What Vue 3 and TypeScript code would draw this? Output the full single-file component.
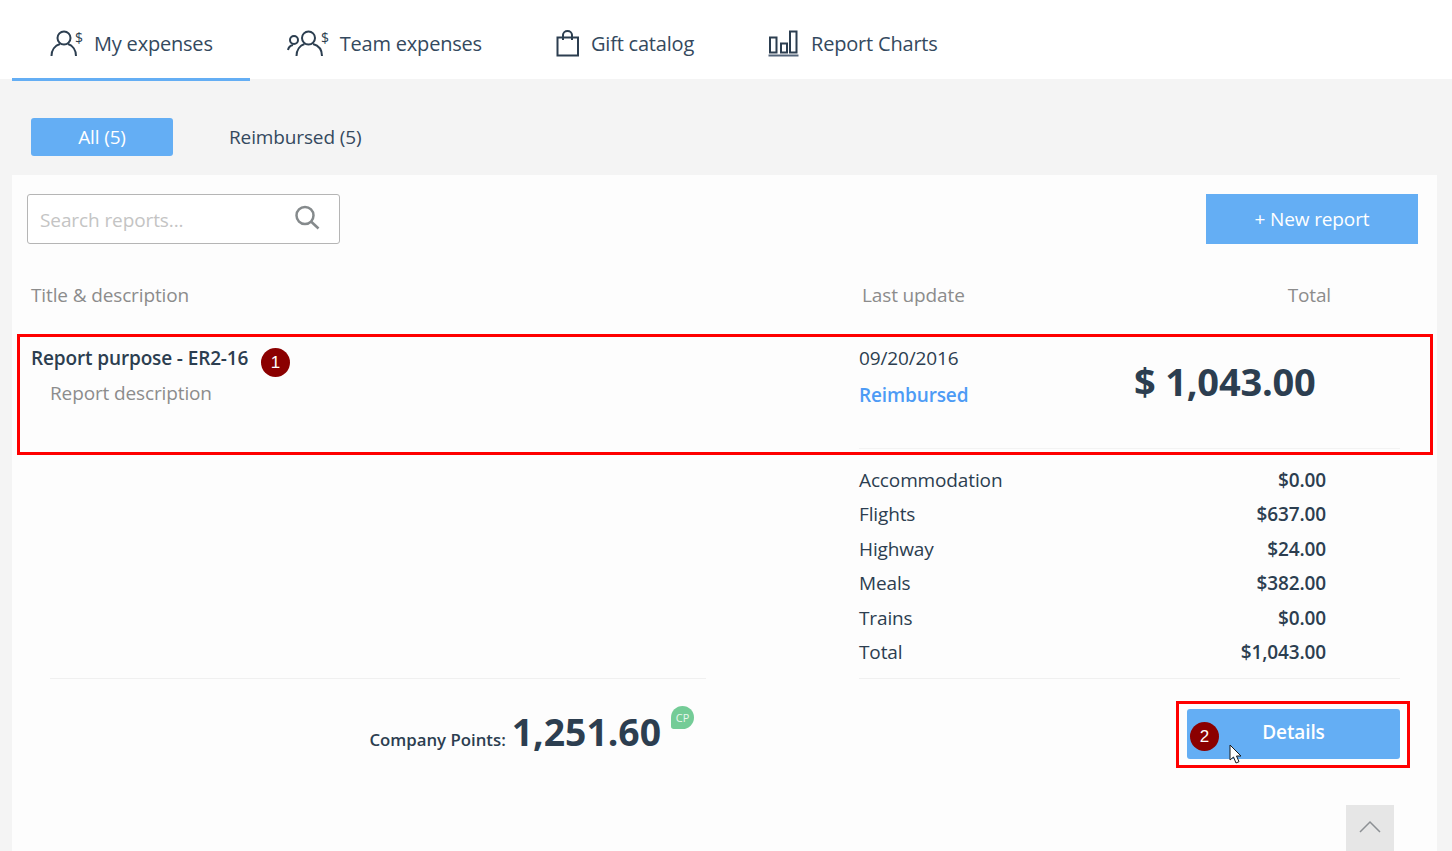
<template>
  <div class="page">
    <!-- top tabs -->
    <nav class="tabs">
      <a v-for="tab in tabs" :key="tab.label" class="tab" :class="{ active: tab.active }">
        <svg v-if="tab.icon === 'user'" class="tab-icon" width="34" height="30" viewBox="0 0 34 30">
          <circle cx="14" cy="11" r="6.500" />
          <path d="M1.500 29C1.500 23 5 18.500 10 17M26 29C26 23 22.500 18.500 18 17" />
          <text x="25" y="16" class="dollar">$</text>
        </svg>
        <svg v-else-if="tab.icon === 'team'" class="tab-icon" width="43" height="30" viewBox="0 0 43 30">
          <circle cx="21.500" cy="11" r="6.500" />
          <circle cx="7" cy="13" r="4" />
          <path d="M9.500 29C9.500 23 13 18.500 17.500 17M35 29C35 23 31.500 18.500 26 17M1 23C1.500 20 3.500 18.500 6 18" />
          <text x="34" y="16" class="dollar">$</text>
        </svg>
        <svg v-else-if="tab.icon === 'bag'" class="tab-icon" width="25" height="30" viewBox="0 0 25 30">
          <path d="M1.500 10.500H22V28.500H1.500zM7 13V8a4.500 4 0 0 1 9 0v5" />
        </svg>
        <svg v-else class="tab-icon" width="33" height="30" viewBox="0 0 33 30">
          <path d="M2 10.500h6.500v15H2zM13 16.500h6v9h-6zM22 4.500h6.500v21H22z" />
          <path d="M0.500 28.500h30" class="base" />
        </svg>
        <span>{{ tab.label }}</span>
      </a>
    </nav>

    <!-- status filter -->
    <div class="filters">
      <button class="filter selected">All (5)</button>
      <button class="filter">Reimbursed (5)</button>
    </div>

    <section class="card">
      <div class="toolbar">
        <div class="search">
          <span class="placeholder">Search reports...</span>
          <svg width="26" height="26" viewBox="0 0 26 26" class="search-icon">
            <circle cx="11" cy="10.500" r="8.500" />
            <path d="M17 16.500l7.500 7" />
          </svg>
        </div>
        <button class="new-report">+ New report</button>
      </div>

      <div class="table-head">
        <span>Title &amp; description</span>
        <span class="head-update">Last update</span>
        <span class="head-total">Total</span>
      </div>

      <div class="report">
        <div class="report-main">
          <div class="report-title">Report purpose - ER2-16</div>
          <div class="report-desc">Report description</div>
        </div>
        <div class="report-status">
          <div class="report-date">09/20/2016</div>
          <div class="report-state">Reimbursed</div>
        </div>
        <div class="report-amount">$ 1,043.00</div>
        <div class="report-rule"></div>
      </div>

      <ul class="breakdown">
        <li v-for="item in breakdown" :key="item.name">
          <span>{{ item.name }}</span>
          <b>{{ item.value }}</b>
        </li>
      </ul>

      <div class="footer">
        <div class="points">
          <span class="points-label">Company Points:</span>
          <span class="points-value">1,251.60</span>
          <span class="cp-badge">CP</span>
        </div>
        <div class="actions">
          <button class="details">Details</button>
        </div>
      </div>

      <button class="to-top" aria-label="Back to top">
        <svg width="24" height="14" viewBox="0 0 24 14"><path d="M2 13L12 3l10 10" /></svg>
      </button>
    </section>

    <!-- annotations over the screenshot -->
    <div class="mark mark-report"></div>
    <div class="mark mark-details"></div>
    <span class="step step-one">1</span>
    <span class="step step-two">2</span>
    <svg class="cursor" width="14" height="21" viewBox="0 0 14 21">
      <path d="M1 1v15l3.500-3 2.500 6 3-1.300-2.500-5.700H12z" />
    </svg>
  </div>
</template>

<script setup lang="ts">
interface Tab {
  label: string
  icon: 'user' | 'team' | 'bag' | 'chart'
  active?: boolean
}

const tabs: Tab[] = [
  { label: 'My expenses', icon: 'user', active: true },
  { label: 'Team expenses', icon: 'team' },
  { label: 'Gift catalog', icon: 'bag' },
  { label: 'Report Charts', icon: 'chart' }
]

const breakdown = [
  { name: 'Accommodation', value: '$0.00' },
  { name: 'Flights', value: '$637.00' },
  { name: 'Highway', value: '$24.00' },
  { name: 'Meals', value: '$382.00' },
  { name: 'Trains', value: '$0.00' },
  { name: 'Total', value: '$1,043.00' }
]
</script>

<style>
html,
body {
  margin: 0;
  background: #f4f4f4;
}
</style>

<style scoped>
.page {
  position: relative;
  height: 851px;
  overflow: hidden;
  background: #f4f4f4;
  font-family: 'Open Sans', 'Noto Sans', sans-serif;
  color: #2c3e50;
}

button {
  font-family: inherit;
  border: none;
  cursor: pointer;
}

/* ========== tabs ========== */
.tabs {
  display: flex;
  height: 79px;
  padding-left: 12px;
  background: #fff;
}

.tab {
  display: flex;
  align-items: center;
  height: 81px;
  box-sizing: border-box;
  padding: 6px 37px 0;
  font-size: 20px;
  letter-spacing: -0.2px;
  color: #34495e;
  border-bottom: 3px solid transparent;
}

.tab.active {
  border-bottom-color: #64aef4;
  padding-left: 38px;
}

.tab span {
  position: relative;
  top: 1px;
}

.tab-icon {
  margin-right: 10px;
  fill: none;
  stroke: #2c3e50;
  stroke-width: 2;
}

.tab-icon .base {
  stroke: #54657a;
}

.tab-icon .dollar {
  font-size: 14px;
  fill: #2c3e50;
  stroke: none;
  font-family: 'Open Sans', sans-serif;
}

/* ========== filter ========== */
.filters {
  display: flex;
  height: 96px;
  box-sizing: border-box;
  padding: 39px 0 0 31px;
}

.filter {
  width: 142px;
  height: 38px;
  margin-right: 56px;
  background: transparent;
  font-size: 19px;
  letter-spacing: -0.13px;
  color: #34495e;
  border-radius: 3px;
  padding: 0;
}

.filter:last-child {
  width: auto;
}

.filter.selected {
  background: #64aef4;
  color: #fff;
}

/* ========== card ========== */
.card {
  position: relative;
  height: 676px;
  margin: 0 15px 0 12px;
  background: #fdfdfd;
}

.toolbar {
  display: flex;
  justify-content: space-between;
  padding: 19px 19px 0 15px;
}

.search {
  display: flex;
  align-items: center;
  justify-content: space-between;
  width: 313px;
  height: 50px;
  box-sizing: border-box;
  padding: 2px 19px 0 12px;
  background: #fff;
  border: 1px solid #b5b5b5;
  border-radius: 3px;
}

.placeholder {
  font-size: 19px;
  letter-spacing: -0.1px;
  color: #c4c4c4;
}

.search-icon {
  margin-bottom: 5px;
  fill: none;
  stroke: #858a8c;
  stroke-width: 2.500;
}

.new-report {
  width: 212px;
  height: 50px;
  background: #64aef4;
  color: #fff;
  font-size: 19px;
  letter-spacing: -0.13px;
}

.table-head {
  display: grid;
  grid-template-columns: 831px 1fr auto;
  height: 91px;
  padding: 38px 106px 0 19px;
  box-sizing: border-box;
  font-size: 19px;
  letter-spacing: -0.13px;
  color: #8c8c8c;
}

.report {
  position: relative;
  display: grid;
  grid-template-columns: 828px 275px 1fr;
  height: 120px;
  padding-left: 19px;
  box-sizing: border-box;
}

.report-title {
  margin-top: 9px;
  font-size: 19px;
  font-weight: 600;
  letter-spacing: -0.13px;
  line-height: 28px;
}

.report-desc {
  margin: 7px 0 0 19px;
  font-size: 19px;
  letter-spacing: -0.13px;
  line-height: 28px;
  color: #8c8c8c;
}

.report-date {
  margin-top: 9px;
  font-size: 19px;
  letter-spacing: -0.13px;
  line-height: 28px;
}

.report-state {
  margin-top: 9px;
  font-size: 19px;
  font-weight: 600;
  letter-spacing: -0.13px;
  line-height: 28px;
  color: #4d9bf5;
}

.report-amount {
  margin-top: 21px;
  font-size: 38px;
  font-weight: 700;
  line-height: 50px;
  letter-spacing: -0.2px;
}

.report-rule {
  position: absolute;
  left: 847px;
  right: 37px;
  top: 113px;
  height: 1px;
  background: #f3f3f3;
}

.breakdown {
  margin: 8px 0 0 847px;
  width: 541px;
  box-sizing: border-box;
  padding: 0 74px 9px 0;
  list-style: none;
  font-size: 19px;
  letter-spacing: -0.13px;
  border-bottom: 1px solid #f0f0f0;
}

.breakdown li {
  display: flex;
  justify-content: space-between;
  height: 34.400px;
  line-height: 34.400px;
}

.breakdown b {
  font-weight: 600;
}

.footer {
  display: flex;
  justify-content: space-between;
  margin-left: 38px;
  margin-right: 37px;
}

.points {
  position: relative;
  display: flex;
  align-items: baseline;
  justify-content: flex-end;
  width: 656px;
  height: 80px;
  box-sizing: border-box;
  margin-top: -1px;
  padding: 28px 45px 0 0;
  border-top: 1px solid #f0f0f0;
}

.points-label {
  margin-right: 6px;
  font-size: 16.800px;
  font-weight: 600;
}

.points-value {
  font-size: 37.300px;
  font-weight: 700;
  line-height: 50px;
}

.cp-badge {
  position: absolute;
  left: 621px;
  top: 27px;
  width: 23px;
  height: 23px;
  border-radius: 50% 50% 50% 12%;
  background: #74cc97;
  color: #e9f7ee;
  font-size: 11px;
  line-height: 23px;
  text-align: center;
}

.actions {
  padding-top: 30px;
}

.details {
  display: block;
  width: 213px;
  height: 50px;
  padding: 0 0 4px;
  background: #64aef4;
  color: #fff;
  font-size: 19px;
  font-weight: 600;
  letter-spacing: -0.13px;
  border-radius: 3px;
}

.to-top {
  position: absolute;
  left: 1334px;
  top: 630px;
  width: 48px;
  height: 46px;
  padding: 0;
  background: #e6e6e6;
}

.to-top svg {
  display: block;
  margin: 0 auto 4px;
  fill: none;
  stroke: #8c9094;
  stroke-width: 1.500;
}

/* ========== annotations ========== */
.mark {
  position: absolute;
  box-sizing: border-box;
  border: 3px solid #f00;
}

.mark-report {
  left: 17px;
  top: 334px;
  width: 1416px;
  height: 121px;
}

.mark-details {
  left: 1176px;
  top: 701px;
  width: 234px;
  height: 67px;
}

.step {
  position: absolute;
  width: 29px;
  height: 29px;
  border-radius: 50%;
  background: #8b0000;
  color: #fff;
  font-family: 'Liberation Sans', sans-serif;
  font-size: 17px;
  line-height: 29px;
  text-align: center;
}

.step-one {
  left: 261px;
  top: 348px;
}

.step-two {
  left: 1190px;
  top: 722px;
}

.cursor {
  position: absolute;
  left: 1229px;
  top: 744px;
  fill: #fff;
  stroke: #1a1a1a;
  stroke-width: 1;
}
</style>
